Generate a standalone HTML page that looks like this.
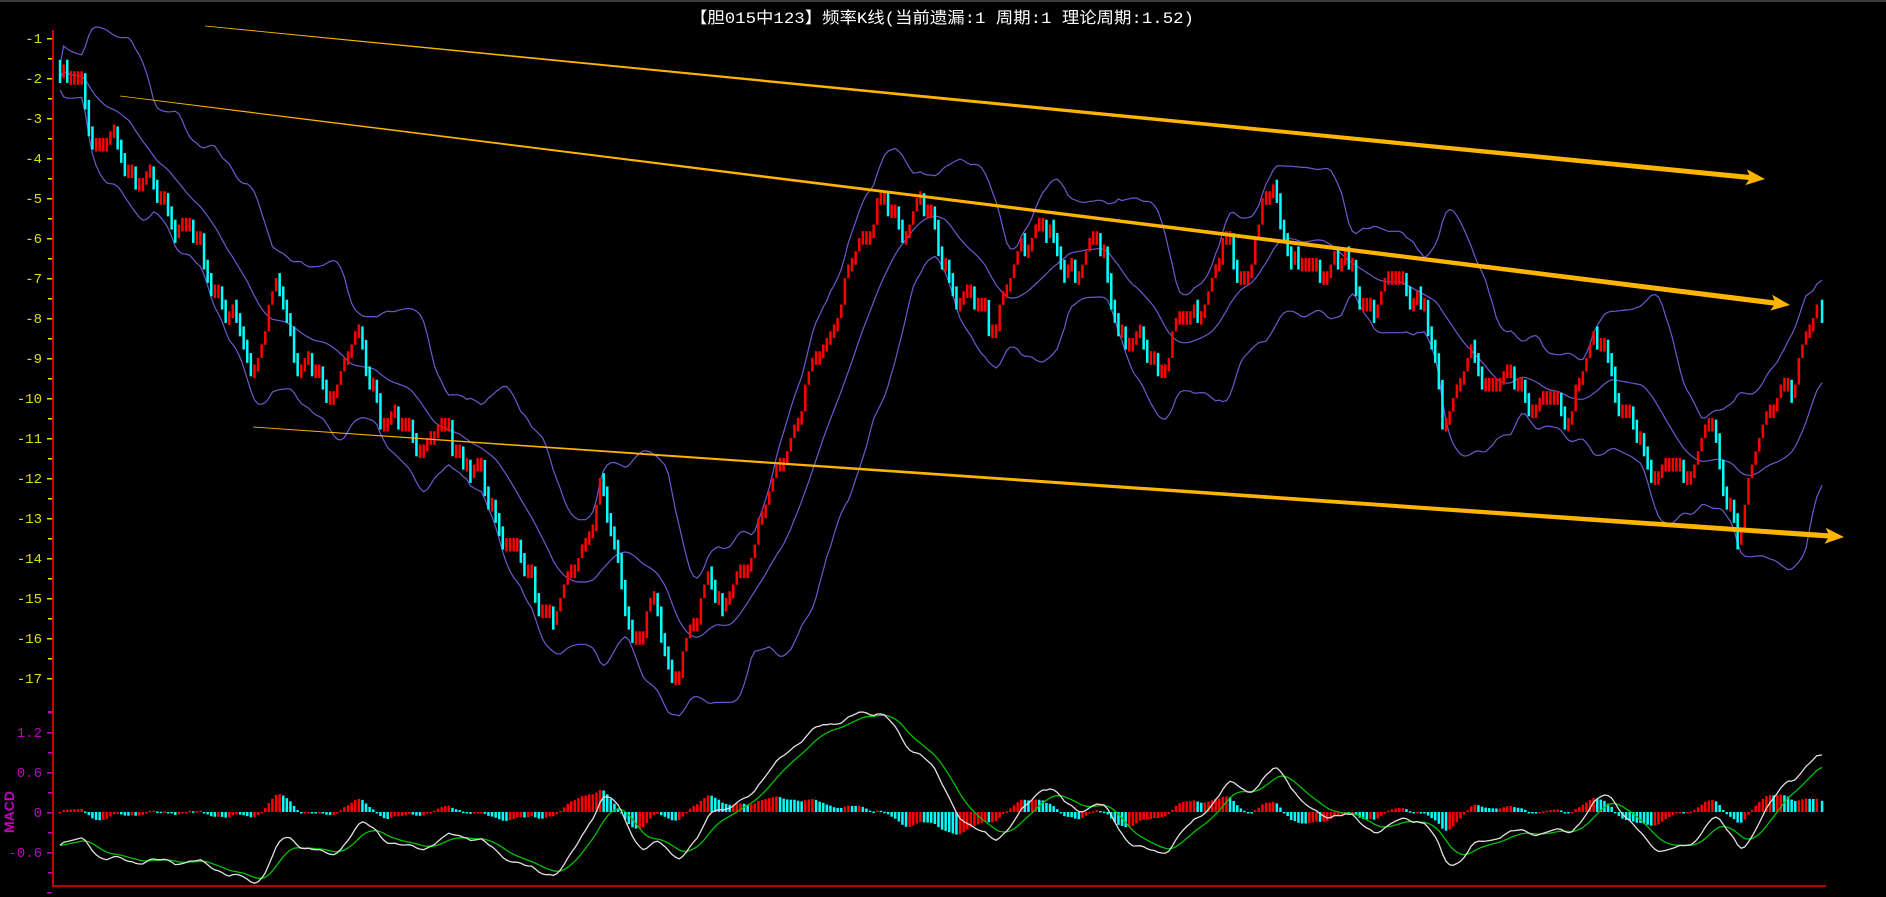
<!DOCTYPE html>
<html><head><meta charset="utf-8">
<style>
html,body{margin:0;padding:0;background:#000;width:1886px;height:897px;overflow:hidden}
svg{display:block}
.ty{fill:#E0E000;font-family:"Liberation Mono",monospace;font-size:14px}
.tm{fill:#C000C0;font-family:"Liberation Mono",monospace;font-size:14px}
</style></head>
<body>
<svg id="c" width="1886" height="897" xmlns="http://www.w3.org/2000/svg">
<rect x="0" y="0" width="1886" height="897" fill="#000"/>
<rect x="0" y="0" width="1886" height="2" fill="#3a3a3a"/>
<text x="690" y="23" textLength="504" lengthAdjust="spacingAndGlyphs" fill="#fff" font-size="16" font-family="'Liberation Mono','Noto Sans CJK SC',monospace">【胆015中123】频率K线(当前遗漏:1 周期:1 理论周期:1.52)</text>
<g id="axis"></g>
<g id="bands"></g>
<g id="candles"></g>
<g id="trend"></g>
<g id="macd"></g>
<text class="tm" x="0" y="0" transform="translate(14,812) rotate(-90)" text-anchor="middle" font-weight="bold" font-size="13" style="font-family:'Liberation Sans',sans-serif">MACD</text>
<text class="tm" x="42" y="737" text-anchor="end">1.2</text>
<text class="tm" x="42" y="777" text-anchor="end">0.6</text>
<text class="tm" x="42" y="817" text-anchor="end">0</text>
<text class="tm" x="42" y="857" text-anchor="end">-0.6</text>
<text class="ty" x="42" y="43" text-anchor="end">-1</text>
<text class="ty" x="42" y="83" text-anchor="end">-2</text>
<text class="ty" x="42" y="123" text-anchor="end">-3</text>
<text class="ty" x="42" y="163" text-anchor="end">-4</text>
<text class="ty" x="42" y="203" text-anchor="end">-5</text>
<text class="ty" x="42" y="243" text-anchor="end">-6</text>
<text class="ty" x="42" y="283" text-anchor="end">-7</text>
<text class="ty" x="42" y="323" text-anchor="end">-8</text>
<text class="ty" x="42" y="363" text-anchor="end">-9</text>
<text class="ty" x="42" y="403" text-anchor="end">-10</text>
<text class="ty" x="42" y="443" text-anchor="end">-11</text>
<text class="ty" x="42" y="483" text-anchor="end">-12</text>
<text class="ty" x="42" y="523" text-anchor="end">-13</text>
<text class="ty" x="42" y="563" text-anchor="end">-14</text>
<text class="ty" x="42" y="603" text-anchor="end">-15</text>
<text class="ty" x="42" y="643" text-anchor="end">-16</text>
<text class="ty" x="42" y="683" text-anchor="end">-17</text>
</svg>
<script>
(function(){
var NS="http://www.w3.org/2000/svg";
function el(p,t,a){var e=document.createElementNS(NS,t);for(var k in a)e.setAttribute(k,a[k]);p.appendChild(e);return e;}
var ax=document.getElementById('axis');
el(ax,'rect',{x:52,y:30,width:2,height:857,fill:'#D00000'});
el(ax,'rect',{x:52,y:885,width:1774,height:2,fill:'#C00000'});
for(var i=0;i<17;i++){var y=38+i*40;el(ax,'rect',{x:47,y:y,width:5,height:1.5,fill:'#E0E000'});if(i<16)el(ax,'rect',{x:48,y:y+20,width:4,height:1.5,fill:'#E0E000'});}
el(ax,'rect',{x:48,y:711,width:4,height:1.5,fill:'#C000C0'});
for(var j=0;j<5;j++){var yy=712+j*40;el(ax,'rect',{x:47,y:yy+20,width:5,height:1.5,fill:'#C000C0'});el(ax,'rect',{x:48,y:yy,width:4,height:1.5,fill:'#C000C0'});}
var P=[[50,-2],[70,-2.2],[78,-3.5],[100,-4],[130,-5],[160,-6],[175,-7],[200,-8.5],[210,-9.3],[230,-7.2],[245,-8.7],[270,-10],[295,-8.5],[320,-10.5],[350,-11],[375,-10.9],[400,-12.2],[430,-14],[460,-15.6],[480,-14],[500,-12.4],[520,-15],[530,-16.4],[545,-15],[560,-17.2],[575,-16],[590,-14],[600,-15.6],[620,-14],[640,-12.5],[650,-11.5],[680,-9],[700,-7.5],[730,-4.9],[750,-6],[765,-4.7],[780,-6.5],[800,-7.5],[825,-8.1],[840,-7],[865,-5.3],[885,-7],[910,-6],[935,-8.5],[965,-9.1],[1000,-7.5],[1020,-6.2],[1035,-7],[1060,-4.5],[1065,-5.5],[1080,-7],[1110,-6.5],[1130,-7.2],[1145,-7.8],[1165,-6.8],[1185,-8],[1200,-10.4],[1220,-9.2],[1250,-9.5],[1275,-10],[1300,-10.5],[1320,-9],[1335,-8.5],[1350,-10.5],[1370,-11.5],[1400,-12],[1420,-10.5],[1430,-12],[1445,-13.3],[1460,-11.5],[1480,-9.3],[1490,-10],[1510,-7.5],[1515,-8]];
var S=1886/1568;
P=P.map(function(p){return [p[0]*S,p[1]];});
function base(x){if(x<=P[0][0])return P[0][1];for(var k=1;k<P.length;k++){if(x<=P[k][0]){var a=P[k-1],b=P[k];return a[1]+(b[1]-a[1])*(x-a[0])/(b[0]-a[0]);}}return P[P.length-1][1];}
var N=Math.floor((1822-60)/3.6)+1,xs=[],vs=[];
for(var i=0;i<N;i++){var x=60+i*3.6;var v=base(x)+0.28*Math.sin(i*0.55)+0.15*Math.sin(i*1.3+1);v=Math.round(v*3)/3;xs.push(x);vs.push(v);}
xs[N-1]=1822;
function Y(v){return -2-40*v;}
var cg=document.getElementById('candles');
var prev=vs[0]+0.33;
for(var i=0;i<N;i++){var v=vs[i];var up=v>=prev;var hi=Math.max(v,prev),lo=Math.min(v,prev);
if(hi-lo<0.34){var m=(hi+lo)/2;hi=m+0.17;lo=m-0.17;}
if(!up){hi+=0.12;lo-=0.12;}
var y1=Y(hi),y2=Y(lo);
el(cg,'rect',{x:(xs[i]-1.2).toFixed(1),y:y1.toFixed(1),width:2.5,height:(y2-y1).toFixed(1),fill:up?'#FF0000':'#00FFFF'});prev=v;}
var bg=document.getElementById('bands');var up=[],md=[],lw=[];
for(var i=0;i<N;i++){var s=0,c=0;for(var k=Math.max(0,i-19);k<=i;k++){s+=vs[k];c++;}var m=s/c;var q=0;for(var k=Math.max(0,i-19);k<=i;k++)q+=(vs[k]-m)*(vs[k]-m);var sd=Math.sqrt(q/c);
md.push(m);up.push(m+2*sd+0.3);lw.push(m-2*sd-0.3);}
function line(arr,g,col,fy,w){var d='';for(var i=0;i<arr.length;i++){d+=(i?'L':'M')+xs[i].toFixed(1)+','+fy(arr[i]).toFixed(1);}el(g,'path',{d:d,fill:'none',stroke:col,'stroke-width':w||1.2});}
line(up,bg,'#6A5ACD',Y);line(md,bg,'#6A5ACD',Y);line(lw,bg,'#6A5ACD',Y);
var tg=document.getElementById('trend');
function arrow(x1,y1,x2,y2){var dx=x2-x1,dy=y2-y1,L=Math.sqrt(dx*dx+dy*dy),ux=dx/L,uy=dy/L,nx=-uy,ny=ux;
var hx=x2-ux*16,hy=y2-uy*16;var w0=0.4,w1=2.6;
var pts=[[x1+nx*w0,y1+ny*w0],[hx+nx*w1,hy+ny*w1],[hx-ux*3+nx*8,hy-uy*3+ny*8],[x2,y2],[hx-ux*3-nx*8,hy-uy*3-ny*8],[hx-nx*w1,hy-ny*w1],[x1-nx*w0,y1-ny*w0]];
el(tg,'polygon',{points:pts.map(function(p){return p[0].toFixed(1)+','+p[1].toFixed(1);}).join(' '),fill:'#FFB400'});}
arrow(205,26,1765,179);arrow(120,96,1790,305);arrow(253,427,1844,537);
var mg=document.getElementById('macd');
function ema(a,n){var r=[],k=2/(n+1);for(var i=0;i<a.length;i++)r.push(i?a[i]*k+r[i-1]*(1-k):a[i]);return r;}
var e1=ema(vs,12),e2=ema(vs,26),dif=[];for(var i=0;i<N;i++)dif.push(e1[i]-e2[i]);
var mx=0;for(var i=0;i<N;i++)mx=Math.max(mx,dif[i]);var sc=1.5/mx;
for(var i=0;i<N;i++)dif[i]+=(-0.5/sc)*Math.exp(-i/25);
var dea=ema(dif,9);
function MY(v){return 812-v*sc*66.7;}
var ph=0;for(var i=0;i<N;i++){var h=(dif[i]-dea[i])*0.9;var y=MY(h);var top=Math.min(y,812),ht=Math.max(Math.abs(y-812),1.5);
el(mg,'rect',{x:(xs[i]-1.2).toFixed(1),y:top.toFixed(1),width:2.5,height:ht.toFixed(1),fill:h>=ph?'#FF0000':'#00FFFF'});ph=h;}
line(dea,mg,'#00C000',MY,1.3);line(dif,mg,'#E0E0E0',MY,1.3);
})();
</script>
</body></html>
